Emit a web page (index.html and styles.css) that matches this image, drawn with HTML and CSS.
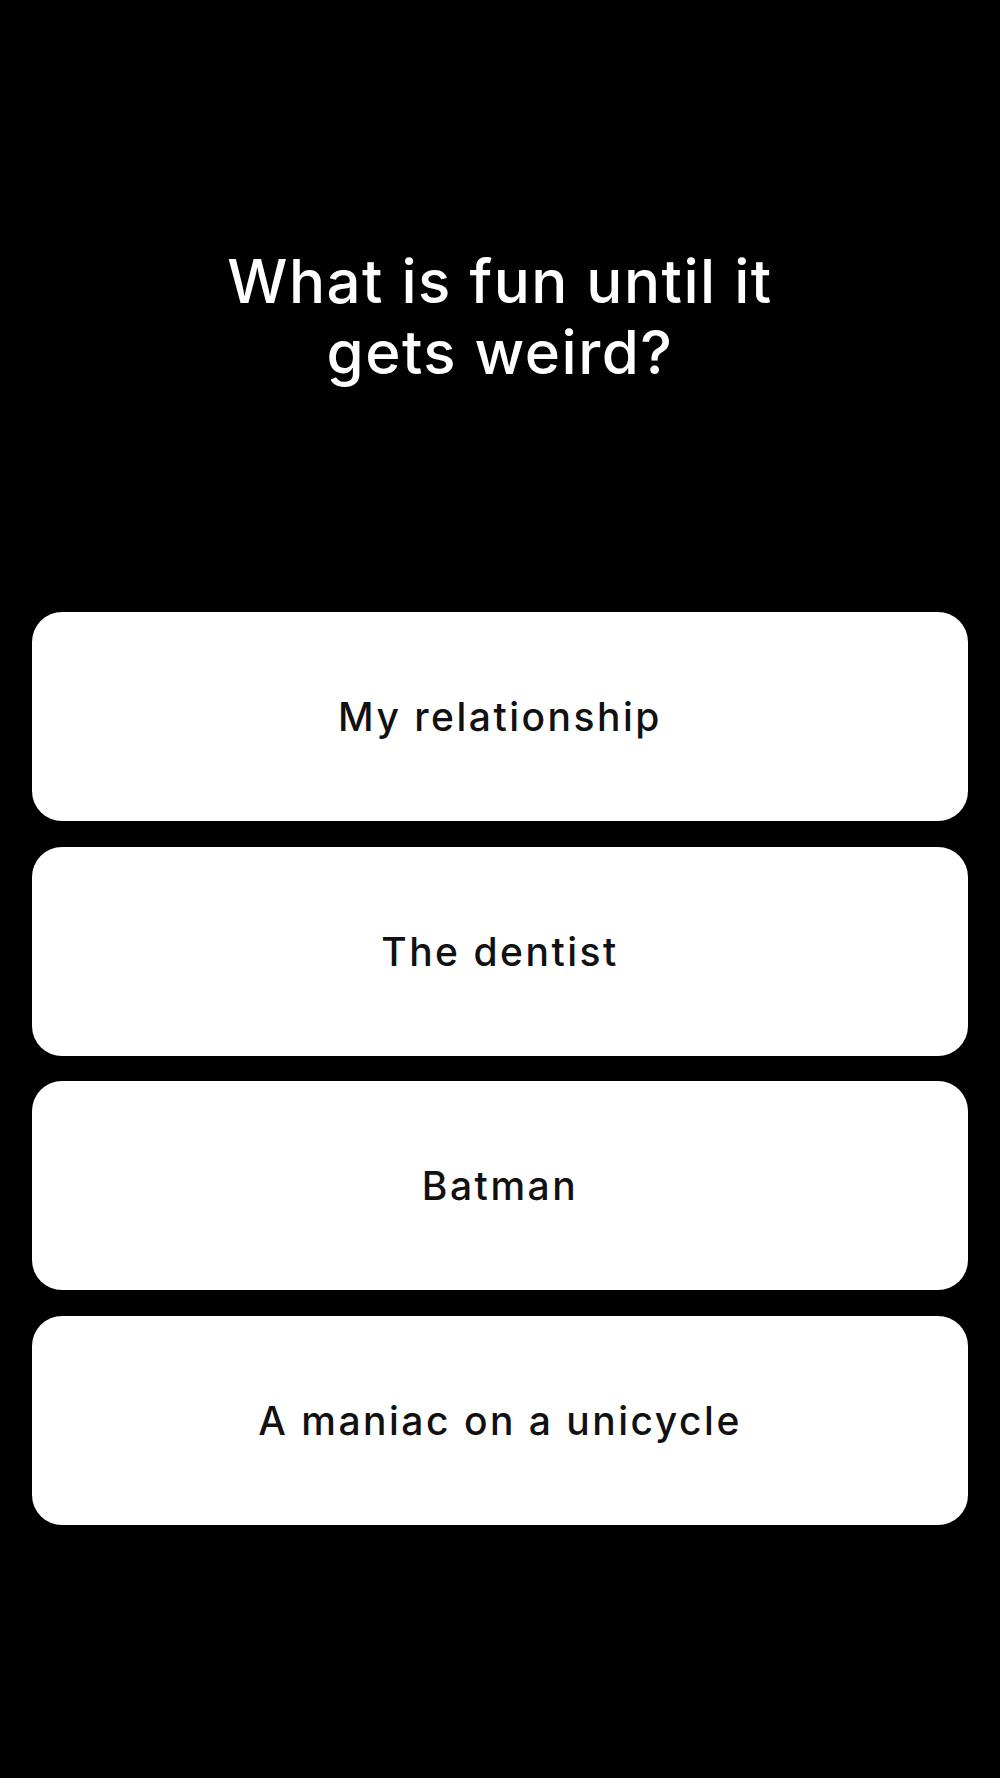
FILE: index.html
```html
<!DOCTYPE html>
<html lang="en">

<head>
    <meta charset="UTF-8">
    <meta name="viewport" content="width=device-width, initial-scale=1.0">
    <title>Quiz</title>
    <link rel="stylesheet" href="styles.css">
</head>

<body>
    <div class="quiz">
        <div class="question">
            <h1>What is fun until it<br>gets weird?</h1>
        </div>

        <div class="answers">
            <button class="answer">My relationship</button>
            <button class="answer">The dentist</button>
            <button class="answer">Batman</button>
            <button class="answer">A maniac on a unicycle</button>
        </div>
    </div>
</body>

</html>
```

FILE: styles.css
```css
/* Reset */
body,
div,
h1,
button {
    margin: 0;
    padding: 0;
    box-sizing: border-box;
}

body {
    background-color: #000;
    font-family: Inter, 'Noto Sans', sans-serif;
    color: #fff;
    min-height: 1778px;
}

.quiz {
    padding: 0 32px;
}

/* Question header */
.question {
    height: 612px;
    padding-top: 246px;
    text-align: center;
}

.question h1 {
    font-size: 60px;
    font-weight: 500;
    line-height: 71px;
    letter-spacing: 1.5px;
}

/* Answer cards */
.answers {
    display: flex;
    flex-direction: column;
    gap: 25.5px;
}

.answer {
    display: flex;
    align-items: center;
    justify-content: center;
    height: 209px;
    width: 100%;
    border: none;
    border-radius: 30px;
    background-color: #fff;
    color: #111;
    font-family: inherit;
    font-size: 39px;
    font-weight: 500;
    letter-spacing: 2.5px;
}
```
